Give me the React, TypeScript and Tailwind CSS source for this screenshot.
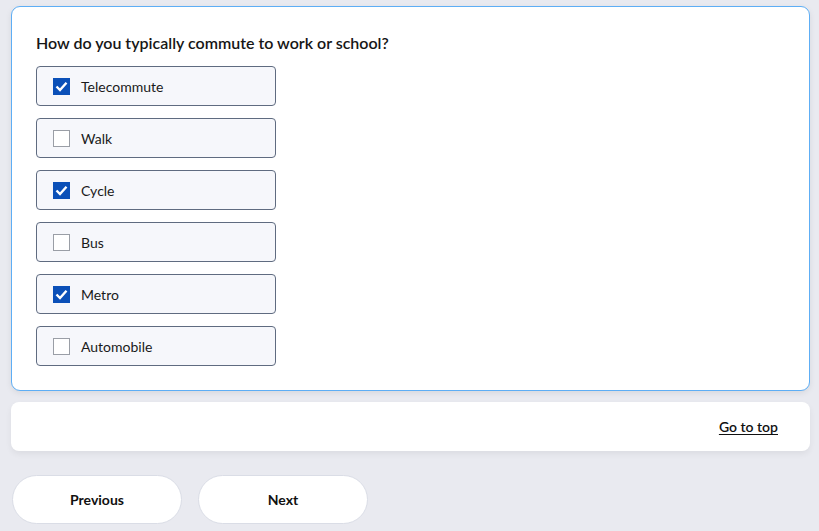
import React, { useState } from 'react';

const options = ['Telecommute', 'Walk', 'Cycle', 'Bus', 'Metro', 'Automobile'];

export default function App() {
  const [checked, setChecked] = useState<string[]>(['Telecommute', 'Cycle', 'Metro']);

  const toggle = (o: string) =>
    setChecked((c) => (c.includes(o) ? c.filter((x) => x !== o) : [...c, o]));

  return (
    <div className="min-h-[531px] bg-[#e9eaf0] pl-[11px] pr-[9px] pt-[6px] pb-4 font-['Lato','Noto_Sans',sans-serif] text-[#111]">
      {/* Question card */}
      <div className="rounded-[9px] border border-[#5eaef5] bg-white pl-[24px] pr-6 pt-[25px] pb-[24px] shadow-[0_2px_6px_rgba(0,0,0,0.08)]">
        <h2 className="text-[16px] leading-[22px] font-semibold text-[#161616]">
          How do you typically commute to work or school?
        </h2>
        <div className="mt-[12px] flex flex-col gap-[12px]">
          {options.map((o) => {
            const on = checked.includes(o);
            return (
              <label
                key={o}
                onClick={() => toggle(o)}
                className="flex h-[40px] w-[240px] cursor-pointer items-center rounded-[4px] border border-[#5f6b80] bg-[#f6f7fb] pl-[16px]"
              >
                {on ? (
                  <span className="flex h-[17px] w-[17px] items-center justify-center bg-[#0b50b8]">
                    <svg width="13" height="11" viewBox="0 0 13 11" fill="none">
                      <path d="M1.5 5.5 L5 9 L11.5 1.8" stroke="white" strokeWidth="2.4" />
                    </svg>
                  </span>
                ) : (
                  <span className="h-[17px] w-[17px] border border-[#9a9ea6] bg-white" />
                )}
                <span className="ml-[11px] text-[14px] text-[#1a1a1a]">{o}</span>
              </label>
            );
          })}
        </div>
      </div>

      {/* Footer card */}
      <div className="mt-[11px] flex h-[49px] items-center justify-end rounded-[8px] bg-white pr-[32px] shadow-[0_3px_6px_rgba(0,0,0,0.06)]">
        <a href="#" className="text-[14px] font-semibold text-[#111] underline underline-offset-2">
          Go to top
        </a>
      </div>

      {/* Navigation */}
      <div className="mt-[24px] flex gap-[16px] pl-[1px]">
        <button className="h-[49px] w-[170px] rounded-full border border-[#dadde6] bg-white text-[14px] font-bold text-[#111]">
          Previous
        </button>
        <button className="h-[49px] w-[170px] rounded-full border border-[#dadde6] bg-white text-[14px] font-bold text-[#111]">
          Next
        </button>
      </div>
    </div>
  );
}
